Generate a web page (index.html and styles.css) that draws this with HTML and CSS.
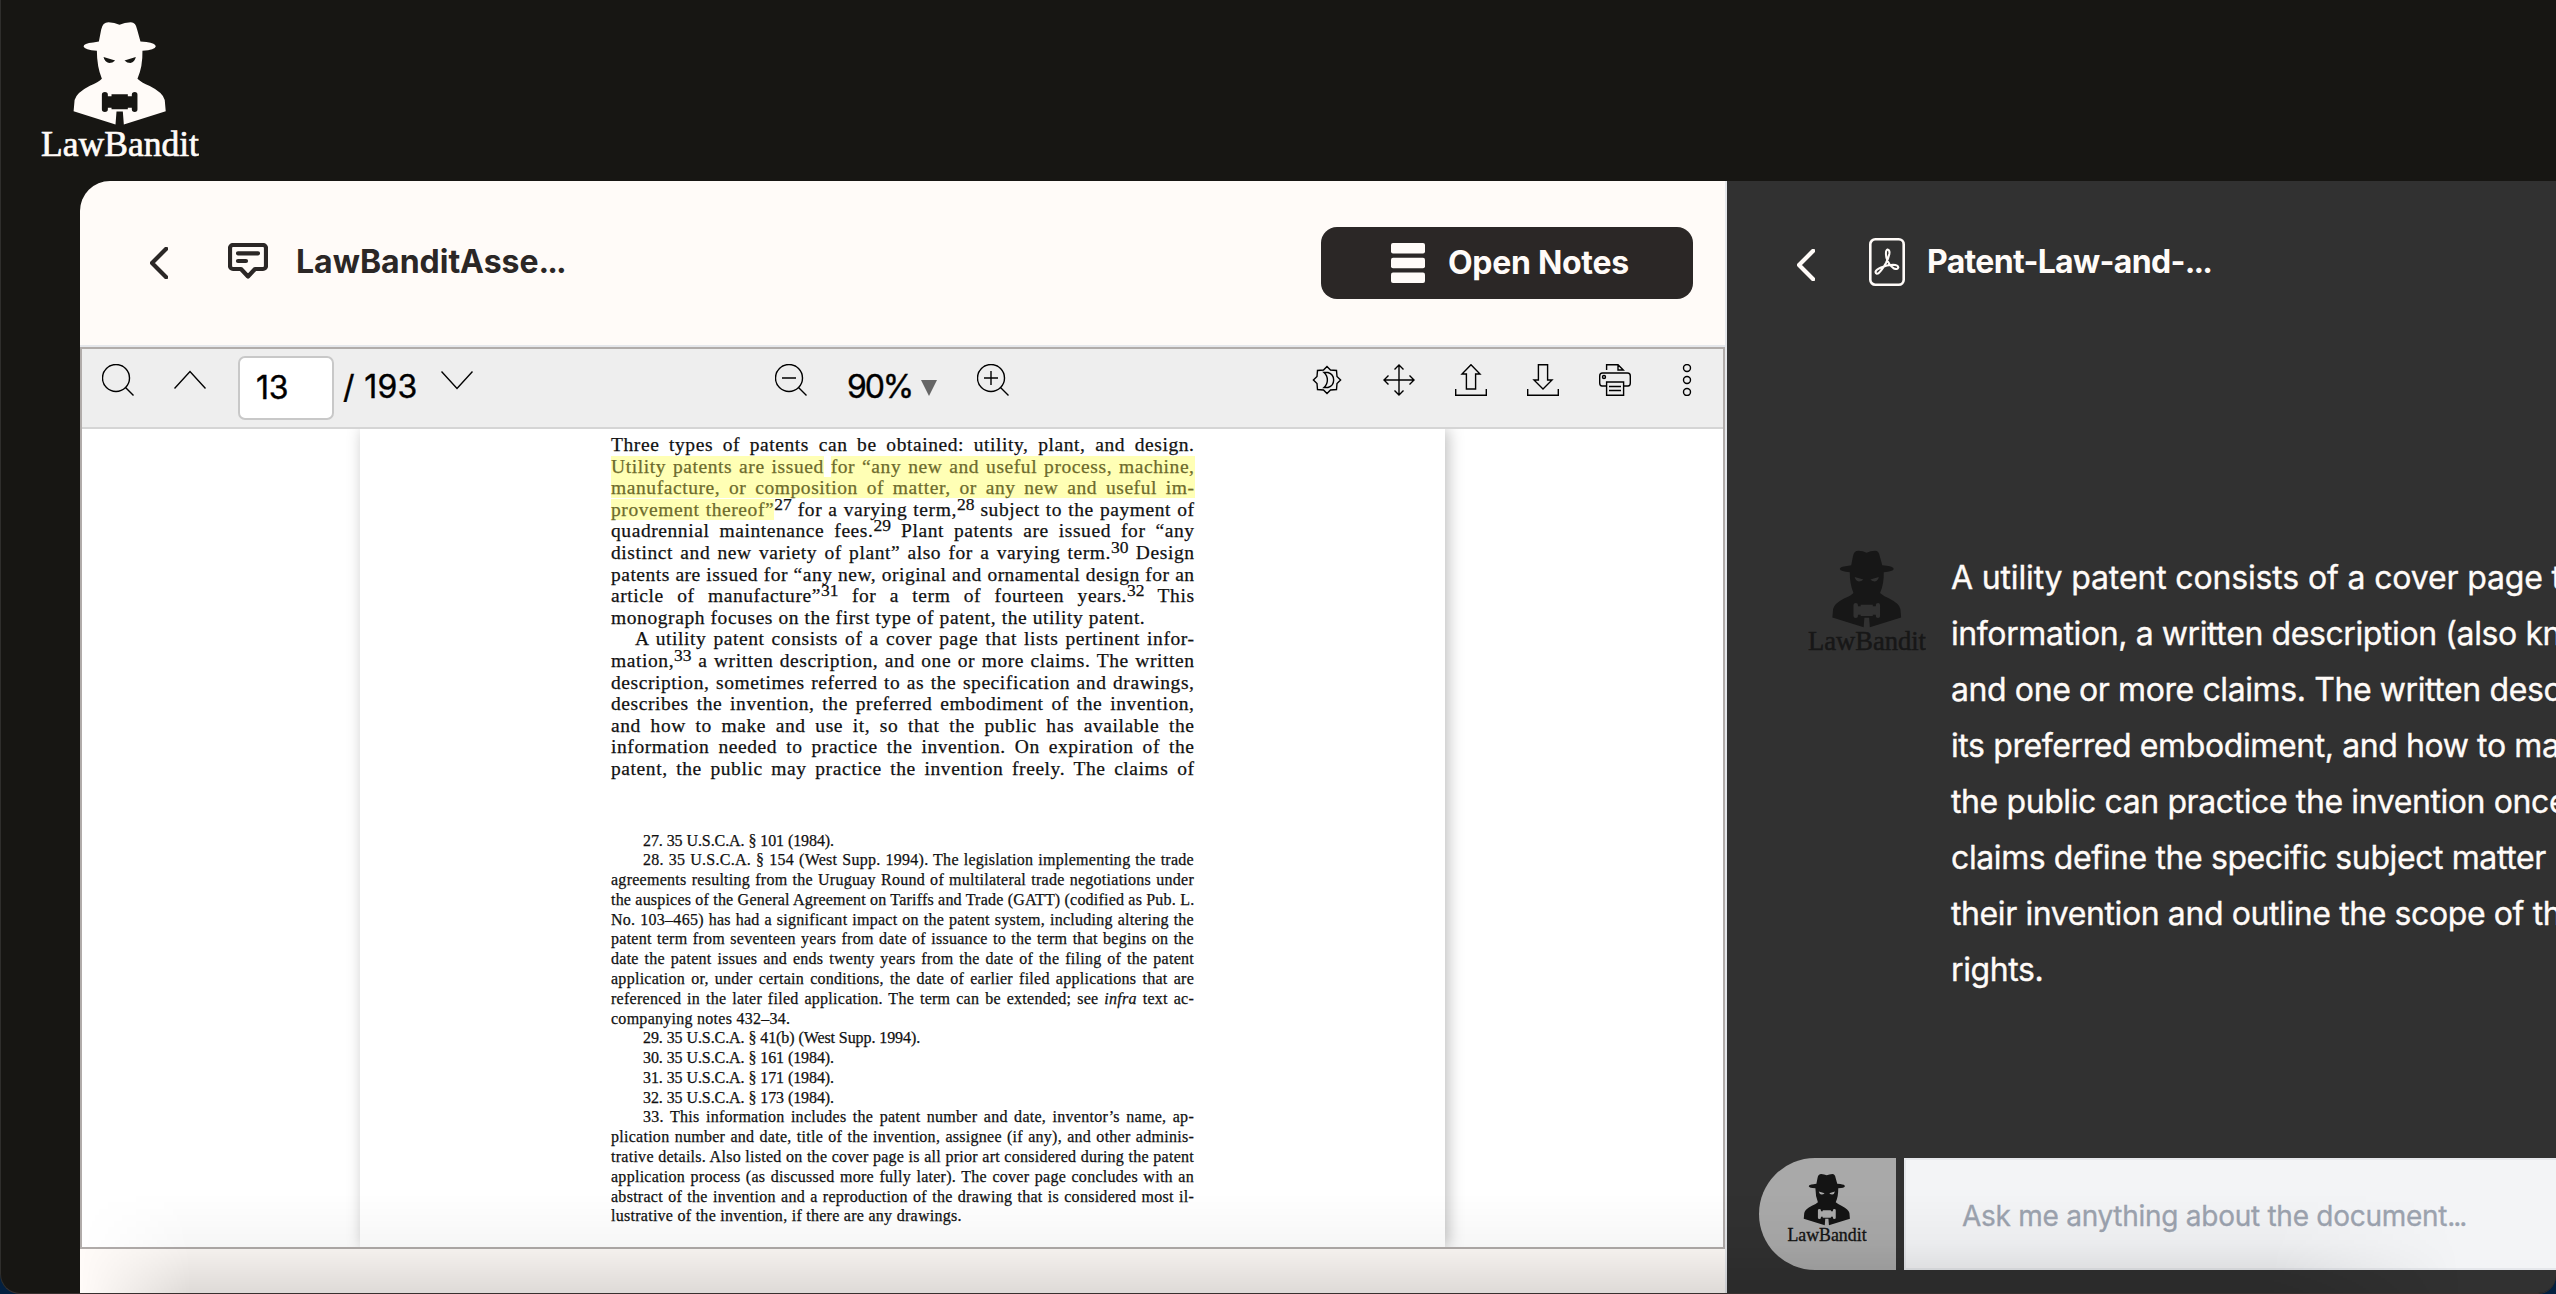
FILE: index.html
```
<!DOCTYPE html>
<html lang="en">
<head>
<meta charset="utf-8">
<title>LawBandit</title>
<link rel="stylesheet" href="styles.css">
</head>
<body>
<svg class="defs" width="0" height="0" aria-hidden="true">
  <symbol id="bandit" viewBox="123 60 475 420">
    <path fill="currentColor" fill-rule="evenodd" d="M297 124 L304 88 Q308 66 326 66 Q344 67 359 74 Q374 67 393 66 Q408 66 412 88 L422 124 L440 126 Q468 130 468 139 Q466 149 428 152 Q429 200 413 236 Q424 247 450 258 Q490 278 495 300 L498 334 L372 374 L369 335 L350 335 L347 374 L221 334 L224 300 Q229 278 270 257 Q296 247 306 236 Q291 200 291 152 Q254 149 251 139 Q251 130 280 127 Z M311 171 L346 181 Q338 189 328 189 Q314 186 311 171Z M408 171 L374 181 Q382 189 392 189 Q405 186 408 171Z M306 284 Q306 276 315 276 Q324 276 324 284 V289 H335 V283 H384 V289 H396 V284 Q396 276 405 276 Q413 276 413 284 V328 Q413 336 405 336 Q396 336 396 328 V323 H384 V328 H335 V323 H324 V328 Q324 336 315 336 Q306 336 306 328Z"/>
    <text class="wordmark" x="123" y="467" textLength="475" lengthAdjust="spacingAndGlyphs">LawBandit</text>
  </symbol>
</svg>

<div class="window">
  <header class="topbar">
    <svg class="logo logo-main"><use href="#bandit"/></svg>
  </header>

  <main class="workspace">
    <section class="reader">
      <div class="panel-head">
        <svg class="chevron" viewBox="0 0 18 32"><path d="M16.2 1.8 L2 16 L16.2 30.2"/></svg>
        <svg class="icon-message" viewBox="0 0 40 36"><path d="M5 2 H35 A3 3 0 0 1 38 5 V23 A3 3 0 0 1 35 26 H27 L20 33.5 L13 26 H5 A3 3 0 0 1 2 23 V5 A3 3 0 0 1 5 2 Z M10 10.3 H30 M10 18 H18"/></svg>
        <h1 class="title title-reader">LawBanditAsse<span class="dots">...</span></h1>
        <button class="notes-btn">
          <svg class="icon-bars" viewBox="0 0 34 40"><rect width="34" height="10.5" rx="2"/><rect y="14.7" width="34" height="10.5" rx="2"/><rect y="29.4" width="34" height="10.5" rx="2"/></svg>
          <span>Open Notes</span>
        </button>
      </div>

      <div class="viewer">
        <div class="toolbar">
          <div class="group group-pages">
            <svg class="tool" viewBox="0 0 32 32"><circle cx="14" cy="14" r="13.5"/><path d="M23.5 23.5 L31.5 31.5"/></svg>
            <svg class="tool" viewBox="0 0 32 32"><path d="M.5 24.5 L16 7.5 L31.5 24.5"/></svg>
            <div class="page-input">13</div>
            <span class="tool-text page-total">/ 193</span>
            <svg class="tool" viewBox="0 0 32 32"><path d="M.5 7.5 L16 24.5 L31.5 7.5"/></svg>
          </div>
          <div class="group group-zoom">
            <svg class="tool" viewBox="0 0 32 32"><circle cx="14" cy="14" r="13.5"/><path d="M23.5 23.5 L31.5 31.5 M7 14 H21"/></svg>
            <span class="tool-text zoom-value">90%</span>
            <svg class="caret" viewBox="0 0 16 16"><path d="M0 0 H16 L8 16Z"/></svg>
            <svg class="tool" viewBox="0 0 32 32"><circle cx="14" cy="14" r="13.5"/><path d="M23.5 23.5 L31.5 31.5 M7 14 H21 M14 7 V21"/></svg>
          </div>
          <div class="group group-actions">
            <svg class="tool" viewBox="0 0 32 32"><path d="M16 2.4 L19.5 6 L25.5 6.5 L26 12.5 L29.6 16 L26 19.5 L25.5 25.5 L19.5 26 L16 29.6 L12.5 26 L6.5 25.5 L6 19.5 L2.4 16 L6 12.5 L6.5 6.5 L12.5 6 Z M13 8.5 H17 A7.8 7.8 0 0 1 17 23.5 H13 A10 10 0 0 0 13 8.5Z"/></svg>
            <svg class="tool" viewBox="0 0 32 32"><path d="M16 1 V31 M1 16 H31 M11.5 5.5 L16 1 L20.5 5.5 M11.5 26.5 L16 31 L20.5 26.5 M5.5 11.5 L1 16 L5.5 20.5 M26.5 11.5 L31 16 L26.5 20.5"/></svg>
            <svg class="tool" viewBox="0 0 32 32"><path d="M16 .7 L25 10 H20.6 V25 H11.4 V10 H7 Z M.7 25 V31.3 H31.3 V25"/></svg>
            <svg class="tool" viewBox="0 0 32 32"><path d="M16 25 L7 16 H11.4 V.7 H20.6 V16 H25 Z M.7 25 V31.3 H31.3 V25"/></svg>
            <svg class="tool" viewBox="0 0 32 32"><path d="M7.6 6 V.7 H19 L24.3 6 H19 V.7 M7.6 22 H3 Q.7 22 .7 19 V12 Q.7 9 3.5 9 H28.5 Q31.3 9 31.3 12 V19 Q31.3 22 29 22 H24.6 M7.6 18 H24.6 V31.3 H7.6 Z M10 22.5 H22 M10 26.5 H22"/><circle cx="5" cy="13" r="1.5"/></svg>
            <svg class="tool" viewBox="0 0 32 32"><circle cx="16" cy="4" r="3.5"/><circle cx="16" cy="16" r="3.5"/><circle cx="16" cy="28" r="3.5"/></svg>
          </div>
        </div>

        <div class="canvas">
          <article class="paper">
            <div class="body-text">
              <p>Three types of patents can be obtained: utility, plant, and design.</p>
              <p><mark>Utility patents are issued</mark> <mark>for “any new and useful process, machine,</mark></p>
              <p><mark>manufacture, or composition of matter, or any new and useful im-</mark></p>
              <p><mark>provement thereof”</mark><sup>27</sup> for a varying term,<sup>28</sup> subject to the payment of</p>
              <p>quadrennial maintenance fees.<sup>29</sup> Plant patents are issued for “any</p>
              <p>distinct and new variety of plant” also for a varying term.<sup>30</sup> Design</p>
              <p class="tight">patents are issued for “any new, original and ornamental design for an</p>
              <p>article of manufacture”<sup>31</sup> for a term of fourteen years.<sup>32</sup> This</p>
              <p class="last">monograph focuses on the first type of patent, the utility patent.</p>
              <p class="indent">A utility patent consists of a cover page that lists pertinent infor-</p>
              <p>mation,<sup>33</sup> a written description, and one or more claims. The written</p>
              <p>description, sometimes referred to as the specification and drawings,</p>
              <p>describes the invention, the preferred embodiment of the invention,</p>
              <p>and how to make and use it, so that the public has available the</p>
              <p>information needed to practice the invention. On expiration of the</p>
              <p>patent, the public may practice the invention freely. The claims of</p>
            </div>
            <div class="footnotes">
              <p class="indent last cite">27. 35 U.S.C.A. § 101 (1984).</p>
              <p class="indent">28. 35 U.S.C.A. § 154 (West Supp. 1994). The legislation implementing the trade</p>
              <p>agreements resulting from the Uruguay Round of multilateral trade negotiations under</p>
              <p class="tight">the auspices of the General Agreement on Tariffs and Trade (GATT) (codified as Pub. L.</p>
              <p>No. 103–465) has had a significant impact on the patent system, including altering the</p>
              <p>patent term from seventeen years from date of issuance to the term that begins on the</p>
              <p>date the patent issues and ends twenty years from the date of the filing of the patent</p>
              <p>application or, under certain conditions, the date of earlier filed applications that are</p>
              <p>referenced in the later filed application. The term can be extended; see <em>infra</em> text ac-</p>
              <p class="last">companying notes 432–34.</p>
              <p class="indent last cite">29. 35 U.S.C.A. § 41(b) (West Supp. 1994).</p>
              <p class="indent last cite">30. 35 U.S.C.A. § 161 (1984).</p>
              <p class="indent last cite">31. 35 U.S.C.A. § 171 (1984).</p>
              <p class="indent last cite">32. 35 U.S.C.A. § 173 (1984).</p>
              <p class="indent">33. This information includes the patent number and date, inventor’s name, ap-</p>
              <p>plication number and date, title of the invention, assignee (if any), and other adminis-</p>
              <p>trative details. Also listed on the cover page is all prior art considered during the patent</p>
              <p>application process (as discussed more fully later). The cover page concludes with an</p>
              <p>abstract of the invention and a reproduction of the drawing that is considered most il-</p>
              <p class="last">lustrative of the invention, if there are any drawings.</p>
            </div>
          </article>
        </div>
      </div>
    </section>

    <section class="chat">
      <div class="panel-head chat-head">
        <svg class="chevron" viewBox="0 0 18 32"><path d="M16.2 1.8 L2 16 L16.2 30.2"/></svg>
        <svg class="icon-pdf" viewBox="0 0 36 48"><rect x="1.3" y="1.3" width="33.4" height="45.4" rx="5"/><path d="M18.5 11.5 Q21 12 20.3 16 Q19.5 20 17 25 Q13 32 9.5 35.3 Q7 36.5 6.5 34 Q7 31.5 12 29.5 Q18 27 24 26.8 Q29 27 29.3 29.5 Q28.5 32 25 30.5 Q20 27.5 17.5 20 Q16 12.5 18.5 11.5Z"/></svg>
        <h1 class="title title-chat">Patent-Law-and-<span class="dots">...</span></h1>
      </div>

      <div class="message">
        <svg class="logo logo-chat"><use href="#bandit"/></svg>
        <div class="answer">
          <p class="lead">A utility patent consists of a cover page that</p>
          <p>information, a written description (also known</p>
          <p>and one or more claims. The written description</p>
          <p>its preferred embodiment, and how to make</p>
          <p>the public can practice the invention once</p>
          <p>claims define the specific subject matter</p>
          <p>their invention and outline the scope of their</p>
          <p>rights.</p>
        </div>
      </div>

      <div class="composer">
        <div class="avatar"><svg class="logo logo-avatar"><use href="#bandit"/></svg></div>
        <div class="prompt">Ask me anything about the document<span class="dots">...</span></div>
      </div>
    </section>
  </main>
  <div class="bottom-shade"></div>
</div>
</body>
</html>
```
FILE: styles.css
```
* { box-sizing: border-box; }
html, body { margin: 0; width: 2556px; height: 1294px; overflow: hidden; background: #032040; }
body { font-family: Inter, "Liberation Sans", sans-serif; }
p, h1 { margin: 0; }
svg { display: block; flex: none; }
.defs { position: absolute; }

.window {
  position: relative;
  width: 2556px;
  height: 1294px;
  display: flex;
  flex-direction: column;
  overflow: hidden;
  background: #171613;
  border-left: 1px solid #2f2e2c;
  border-bottom: 1px solid #38302f;
  border-radius: 0 0 18px 20px;
}

.topbar { flex: none; height: 181px; padding: 20px 0 0 40px; }
.logo-main { width: 158px; height: 140px; color: #fffbf8; }
.wordmark { font-family: "Liberation Serif", serif; font-size: 107px; fill: currentColor; stroke: currentColor; stroke-width: 2; }

.workspace { flex: 1; display: flex; min-height: 0; padding-left: 79px; }

.reader {
  flex: none;
  width: 1647px;
  display: flex;
  flex-direction: column;
  background: #fffbf8;
  border-right: 2px solid #e5e7eb;
  border-top-left-radius: 30px;
}
.panel-head {
  flex: none;
  height: 166px;
  display: flex;
  align-items: center;
  padding: 0 32px 0 70px;
  color: #2b2726;
  border-bottom: 2px solid #e5e7eb;
}
.chevron { width: 18px; height: 32px; fill: none; stroke: currentColor; stroke-width: 4.2; stroke-linecap: round; stroke-linejoin: round; }
.icon-message { width: 40px; height: 36px; margin: 0 28px 4px 60px; fill: none; stroke: currentColor; stroke-width: 4.2; stroke-linecap: round; stroke-linejoin: round; }
.title { font-size: 32px; line-height: 40px; font-weight: 700; white-space: nowrap; }
.title-reader { letter-spacing: 0; padding-bottom: 2px; }
.dots { letter-spacing: -2px; }
.notes-btn {
  width: 372px;
  height: 72px;
  margin-left: auto;
  padding: 0 0 0 70px;
  display: flex;
  align-items: center;
  gap: 23px;
  border: 0;
  border-radius: 16px;
  background: #2b2726;
  color: #fffbf8;
  font: 700 32px/40px Inter, "Liberation Sans", sans-serif;
  letter-spacing: -.3px;
}
.icon-bars { width: 34px; height: 40px; fill: currentColor; }

.viewer { flex: none; height: 902px; border: 2px solid #b1acaa; display: flex; flex-direction: column; background: #fff; }
.toolbar { flex: none; height: 80px; display: flex; justify-content: space-between; background: #eee; border-bottom: 2px solid #d5d5d5; }
.group { display: flex; align-items: flex-start; }
.tool { width: 32px; height: 32px; margin-top: 15px; fill: none; stroke: #000; stroke-width: 1.4; }
.group-pages { width: 693px; padding-left: 20px; gap: 0; }
.group-pages .tool + .tool { margin-left: 40px; }
.page-input {
  width: 96px;
  height: 64px;
  margin: 7px 0 0 32px;
  padding: 0 0 0 16px;
  border: 2px solid #c8c8c8;
  border-radius: 7px;
  background: #fff;
  font-size: 32px;
  line-height: 59px;
  letter-spacing: -0.3px;
  -webkit-text-stroke: .4px;
}
.tool-text { font-size: 32px; line-height: 40px; margin-top: 18px; white-space: nowrap; -webkit-text-stroke: .4px; }
.page-total { width: 98px; margin-left: 9px; letter-spacing: .3px; }
.group-zoom { flex: 1; }
.zoom-value { width: 73px; margin-left: 40px; letter-spacing: -2.2px; }
.caret { width: 16px; height: 16px; margin: 31px 40px 0 1px; fill: #666; }
.group-actions { gap: 40px; padding-right: 20px; }

.canvas { flex: 1; min-height: 0; overflow: hidden; padding-left: 278px; }
.paper {
  width: 1085px;
  height: 100%;
  padding: 5px 251px 0;
  background: #fff;
  box-shadow: 3px 0 15px rgba(0, 0, 0, .26);
  clip-path: inset(0 -20px 0 -20px);
  font-family: "Liberation Serif", serif;
  color: #111;
  -webkit-text-stroke: .25px;
}
.paper p { text-align: justify; text-align-last: justify; white-space: nowrap; }
.paper p.last { text-align-last: left; }
.body-text p { height: 21.6px; font-size: 19.5px; line-height: 21.6px; letter-spacing: .58px; margin-right: -.58px; }
.body-text p.tight { letter-spacing: .5px; word-spacing: -.2px; }
.body-text p.indent { padding-left: 24px; }
sup { font-size: 17.5px; line-height: 0; vertical-align: 6px; letter-spacing: 0; }
mark { background: #ffffb5; color: #6d6b2c; }
.footnotes { margin-top: 51px; }
.footnotes p { height: 19.79px; font-size: 16px; line-height: 19.79px; letter-spacing: .27px; }
.footnotes p.tight { letter-spacing: .2px; }
.footnotes p.indent { padding-left: 32px; }
.footnotes p.cite { letter-spacing: -.08px; }

.chat { flex: 1; min-width: 0; display: flex; flex-direction: column; background: #313131; overflow: hidden; }
.chat-head { height: 166px; color: #fffbf8; border: 0; padding: 2px 0 0 70px; }
.icon-pdf { width: 36px; height: 48px; margin: 0 22px 7px 54px; fill: none; stroke: currentColor; stroke-width: 2.6; stroke-linejoin: round; }
.icon-pdf path { stroke-width: 2.1; }
.title-chat { padding-bottom: 6px; letter-spacing: -0.68px; }

.message { flex: none; display: flex; padding: 203px 0 0 81px; gap: 25px; color: #fffbf8; }
.logo-chat { width: 118px; height: 105px; margin-top: -1px; color: #171717; }
.answer { font-size: 32px; line-height: 56px; letter-spacing: -0.4px; white-space: nowrap; -webkit-text-stroke: .35px; }
.answer .lead { letter-spacing: -.15px; }

.composer { flex: none; height: 112px; margin: auto 0 23px 32px; display: flex; gap: 8px; }
.avatar { width: 137px; padding: 15px 0 0 28px; background: #a9a9a9; border-radius: 56px 0 0 56px; }
.logo-avatar { width: 80px; height: 70px; color: #141414; }
.prompt {
  flex: 1;
  padding-left: 56px;
  background: #f3f4f6;
  border: 2px solid #e5e7eb;
  border-right: 0;
  color: #9ca3af;
  font-size: 28px;
  line-height: 112px;
  letter-spacing: -.27px;
  white-space: nowrap;
  -webkit-text-stroke: .3px;
}

.bottom-shade {
  position: absolute;
  left: 80px;
  right: 0;
  bottom: 0;
  height: 100px;
  background: linear-gradient(to bottom, rgba(0,0,0,0) 0%, rgba(0,0,0,.03) 50%, rgba(0,0,0,.13) 100%);
  -webkit-mask-image: linear-gradient(to right, transparent 0, #000 110px, #000 2190px, transparent 2380px);
  mask-image: linear-gradient(to right, transparent 0, #000 110px, #000 2190px, transparent 2380px);
}
```
